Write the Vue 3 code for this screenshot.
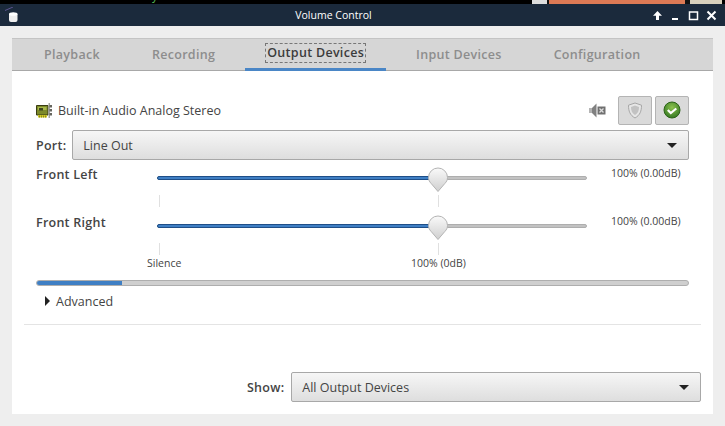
<script setup>
const tabs = ['Playback', 'Recording', 'Output Devices', 'Input Devices', 'Configuration'];
const channels = [
  { name: 'Front Left', value: '100% (0.00dB)', labels: false },
  { name: 'Front Right', value: '100% (0.00dB)', labels: true },
];
</script>

<template>
  <div class="screen">
    <div class="desktop">
      <span class="term">cash file or directory</span>
      <span class="photo"></span>
    </div>
    <header class="titlebar">
      <svg class="app-icon" width="13" height="15" viewBox="0 0 13 15">
        <path d="M4 7h8.500v6a2 2 0 0 1-2 2H6a2 2 0 0 1-2-2z" fill="#eee" />
        <ellipse cx="8.250" cy="7" rx="4.250" ry="1.800" fill="#fff" />
        <path d="M0 3.500L8 0" stroke="#5d5590" stroke-width="1" fill="none" />
      </svg>
      <span class="title">Volume Control</span>
      <div class="wm-buttons">
        <svg width="11" height="11" viewBox="0 0 11 11"><path d="M5.500 1L1 5.800h3V10h3V5.800h3z" fill="#fff" /></svg>
        <svg width="11" height="11" viewBox="0 0 11 11"><path d="M2 8h6v2H2z" fill="#fff" /></svg>
        <svg width="11" height="11" viewBox="0 0 11 11"><path d="M1.500 2h8v7.500h-8z" fill="none" stroke="#fff" stroke-width="1.500" /></svg>
        <svg width="11" height="11" viewBox="0 0 11 11"><path d="M1.500 1.500l8 8M9.500 1.500l-8 8" stroke="#fff" stroke-width="2" /></svg>
      </div>
    </header>

    <main class="window">
      <nav class="tabs">
        <div v-for="(tab, i) in tabs" :key="tab" class="tab" :class="{ active: i === 2 }">
          <span class="tab-label">{{ tab }}</span>
        </div>
      </nav>

      <section class="panel">
        <div class="device">
          <div class="device-head">
            <svg class="card-icon" width="16" height="15" viewBox="0 0 16 15">
              <path d="M.5 2.500h11.500v9.500H.5z" fill="#7d8a2a" stroke="#3a3d12" />
              <path d="M2 4h8.500v3H2z" fill="#a8b84a" />
              <path d="M3 5h4v2.500H3z" fill="#3e4420" />
              <path d="M2 12h9v2.500H2z" fill="#d2cc28" />
              <path d="M3 12.500h1v2H3zM5 12.500h1v2H5zM7 12.500h1v2H7zM9 12.500h1v2H9z" fill="#8d8a14" />
              <path d="M12.500 0h1.500v15h-1.500z" fill="#a4a4a0" />
              <path d="M13.500 2h2.500v2.500h-2.500zM13.500 6h2.500v2.500h-2.500zM13.500 10h2.500v2.500h-2.500z" fill="#66665f" />
            </svg>
            <span class="device-name">Built-in Audio Analog Stereo</span>
            <svg class="mute-icon" width="17" height="15" viewBox="0 0 17 15">
              <path d="M0 5h3v5H0z" fill="#b4b4b4" />
              <path d="M3 5l4.500-4.500v14L3 10z" fill="#808080" />
              <path d="M8.500 3.500h8v8h-8z" fill="#707070" />
              <path d="M10.500 5.500l4 4M14.500 5.500l-4 4" stroke="#ddd" stroke-width="1.300" />
            </svg>
            <button class="toggle">
              <svg width="16" height="17" viewBox="0 0 16 17">
                <path d="M8 1l6.500 2.200c0 6-1.500 10-6.500 12.800C3 13.200 1.500 9.200 1.500 3.200z" fill="#e6e6e6" stroke="#a6a6a6" />
                <path d="M8 3.500l4 1.400c0 3.600-1 6.300-4 8.100-3-1.800-4-4.500-4-8.100z" fill="#c2c2c2" />
              </svg>
            </button>
            <button class="toggle">
              <svg width="18" height="18" viewBox="0 0 18 18">
                <defs>
                  <radialGradient id="okFill" cx="0.5" cy="0.35" r="0.7">
                    <stop offset="0" stop-color="#8cc24e" />
                    <stop offset="1" stop-color="#2f7420" />
                  </radialGradient>
                </defs>
                <circle cx="9" cy="9" r="8" fill="url(#okFill)" stroke="#2c6318" />
                <path d="M4.800 9l3 3 5.500-4.500" fill="none" stroke="#fff" stroke-width="2.200" />
              </svg>
            </button>
          </div>

          <div class="port-row">
            <span class="field-label">Port:</span>
            <div class="combo port-combo">
              <span>Line Out</span>
              <i class="caret"></i>
            </div>
          </div>

          <div v-for="ch in channels" :key="ch.name" class="channel">
            <span class="channel-name">{{ ch.name }}</span>
            <div class="scale">
              <div class="track">
                <div class="track-fill"></div>
                <svg class="knob" width="22" height="27" viewBox="0 0 22 27">
                  <defs>
                    <linearGradient id="knobFill" x1="0" y1="0" x2="0" y2="1">
                      <stop offset="0" stop-color="#fafafa" />
                      <stop offset="1" stop-color="#cfcfcf" />
                    </linearGradient>
                  </defs>
                  <path d="M11 1a9.500 9.500 0 0 1 9.500 9.500c0 2.600-1 4.200-2.500 5.800l-7 8.200-7-8.200C2.500 14.700 1.500 13.100 1.500 10.500A9.500 9.500 0 0 1 11 1z" fill="url(#knobFill)" stroke="#b4b4b4" />
                </svg>
              </div>
              <div class="ticks">
                <i class="tick tick-min"></i>
                <i class="tick tick-norm"></i>
              </div>
              <div v-if="ch.labels" class="marks">
                <span class="mark-silence">Silence</span>
                <span class="mark-norm">100% (0dB)</span>
              </div>
            </div>
            <span class="channel-value">{{ ch.value }}</span>
          </div>

          <div class="level"><div class="level-fill"></div></div>

          <div class="advanced">
            <i class="arrow"></i>
            <span>Advanced</span>
          </div>
        </div>

        <hr class="separator" />

        <div class="show-row">
          <span class="field-label">Show:</span>
          <div class="combo show-combo">
            <span>All Output Devices</span>
            <i class="caret"></i>
          </div>
        </div>
      </section>
    </main>
  </div>
</template>

<style>
html, body {
  margin: 0;
  background: #eee;
}
</style>

<style scoped>
.screen {
  width: 725px;
  height: 426px;
  display: flex;
  flex-direction: column;
  overflow: hidden;
  background: #eee;
  font-family: "Open Sans", "Noto Sans", sans-serif;
  color: #444;
}
.desktop {
  height: 4px;
  background: #000;
  position: relative;
  overflow: hidden;
  flex: none;
}
.term {
  position: absolute;
  left: 0;
  top: -10px;
  font: 12px/14px "Liberation Mono", monospace;
  color: #4fb04f;
  white-space: nowrap;
}
.photo {
  position: absolute;
  left: 532px;
  top: 0;
  width: 190px;
  height: 4px;
  background: linear-gradient(90deg, #ddd 0 15px, #111 15px 17px, #dd7a55 17px 153px, #111 153px 158px, #d8d0bc 158px);
}
.titlebar {
  height: 22px;
  flex: none;
  background: #1b2a3c;
  display: flex;
  align-items: center;
  justify-content: center;
  padding-right: 58px;
  position: relative;
  color: #fff;
  font: 10.5px "Open Sans", sans-serif;
}
.app-icon {
  position: absolute;
  left: 5px;
  top: 3px;
}
.wm-buttons {
  position: absolute;
  right: 8px;
  top: 6px;
  display: flex;
  gap: 7px;
}
.window {
  flex: 1;
  min-height: 0;
  padding: 12px 12px;
  display: flex;
  flex-direction: column;
}
.tabs {
  height: 33px;
  flex: none;
  display: flex;
  gap: 8px;
  padding-left: 10px;
  background: #d6d6d6;
  border-bottom: 1px solid #a8a8a8;
  box-sizing: border-box;
  box-shadow: inset 0 1px 0 #c4c4c4;
}
.tab {
  padding: 0 22px;
  display: flex;
  align-items: center;
  height: 33px;
  box-sizing: border-box;
  padding-bottom: 1px;
  font-size: 12.5px;
  font-weight: 600;
  letter-spacing: 0.3px;
  color: #8d8d8d;
}
.tab.active {
  color: #3c3c3c;
  border-bottom: 3px solid #4a86c6;
}
.tab.active .tab-label {
  line-height: 16px;
  outline: 1px dashed #777;
  outline-offset: 1px;
}
.panel {
  flex: 1;
  background: #fff;
  display: flex;
  flex-direction: column;
  padding: 0 12px;
  min-height: 0;
}
.device {
  padding: 0 12px;
}
.device-head {
  display: flex;
  align-items: center;
  height: 30px;
  margin-top: 24px;
}
.card-icon {
  margin-right: 6px;
}
.device-name {
  font-size: 12.5px;
  flex: 1;
}
.mute-icon {
  margin-right: 9px;
}
.toggle {
  width: 34px;
  height: 29px;
  padding: 0;
  margin-left: 3px;
  border: 1px solid #b4b4b4;
  border-radius: 2px;
  background: #dadada;
  display: flex;
  align-items: center;
  justify-content: center;
}
.port-row {
  display: flex;
  align-items: center;
  gap: 6px;
  margin-top: 5px;
}
.field-label {
  font-size: 12.5px;
  font-weight: 600;
  letter-spacing: 0.25px;
}
.combo {
  box-sizing: border-box;
  height: 30px;
  flex: 1;
  display: flex;
  align-items: center;
  justify-content: space-between;
  padding: 0 11px 0 10px;
  border: 1px solid #a8a8a8;
  border-radius: 2px;
  background: linear-gradient(#f6f6f6, #dedede);
  font-size: 12.5px;
}
.caret {
  width: 0;
  height: 0;
  border-left: 5px solid transparent;
  border-right: 5px solid transparent;
  border-top: 5px solid #222;
}
.channel {
  display: flex;
  height: 48px;
  position: relative;
}
.channel-name {
  width: 121px;
  font-size: 12.5px;
  font-weight: 600;
  letter-spacing: 0.25px;
  line-height: 16px;
  margin-top: 7px;
}
.scale {
  width: 430px;
  position: relative;
}
.track {
  position: relative;
  box-sizing: border-box;
  height: 4px;
  margin-top: 16px;
  background: #c2c2c2;
  border: 1px solid #aeaeae;
  border-radius: 2px;
}
.track-fill {
  width: 280px;
  height: 4px;
  margin: -1px 0 0 -1px;
  box-sizing: border-box;
  background: #3f7fc4;
  border: 1px solid #1f4f88;
  border-radius: 2px;
}
.knob {
  position: absolute;
  left: 269px;
  top: -10px;
}
.ticks {
  position: relative;
  height: 10px;
  margin-top: 15px;
}
.tick {
  position: absolute;
  top: 0;
  width: 1px;
  height: 12px;
  background: #e0e0e0;
}
.tick-min { left: 2px; }
.tick-norm { left: 281px; }
.marks {
  position: absolute;
  top: 48px;
  left: 0;
  width: 100%;
  font-size: 10.5px;
}
.mark-silence {
  position: absolute;
  left: -10px;
}
.mark-norm {
  position: absolute;
  left: 254px;
  white-space: nowrap;
}
.channel-value {
  margin-left: 24px;
  font-size: 10.5px;
  line-height: 14px;
  margin-top: 6px;
  white-space: nowrap;
}
.level {
  height: 6px;
  margin-top: 24px;
  background: #cfcfcf;
  border: 1px solid #aeaeae;
  border-radius: 3px;
  box-sizing: border-box;
  overflow: hidden;
}
.level-fill {
  width: 85px;
  height: 100%;
  background: #3f7fc4;
}
.advanced {
  display: flex;
  align-items: center;
  gap: 6px;
  height: 18px;
  margin-top: 6px;
  padding-left: 9px;
  font-size: 12.5px;
}
.arrow {
  width: 0;
  height: 0;
  border-top: 5px solid transparent;
  border-bottom: 5px solid transparent;
  border-left: 5px solid #222;
}
.separator {
  border: 0;
  border-top: 1px solid #e4e4e4;
  margin: 14px 0 0;
}
.show-row {
  display: flex;
  align-items: center;
  gap: 7px;
  margin-top: auto;
  margin-bottom: 12px;
  margin-left: 223px;
}
</style>
